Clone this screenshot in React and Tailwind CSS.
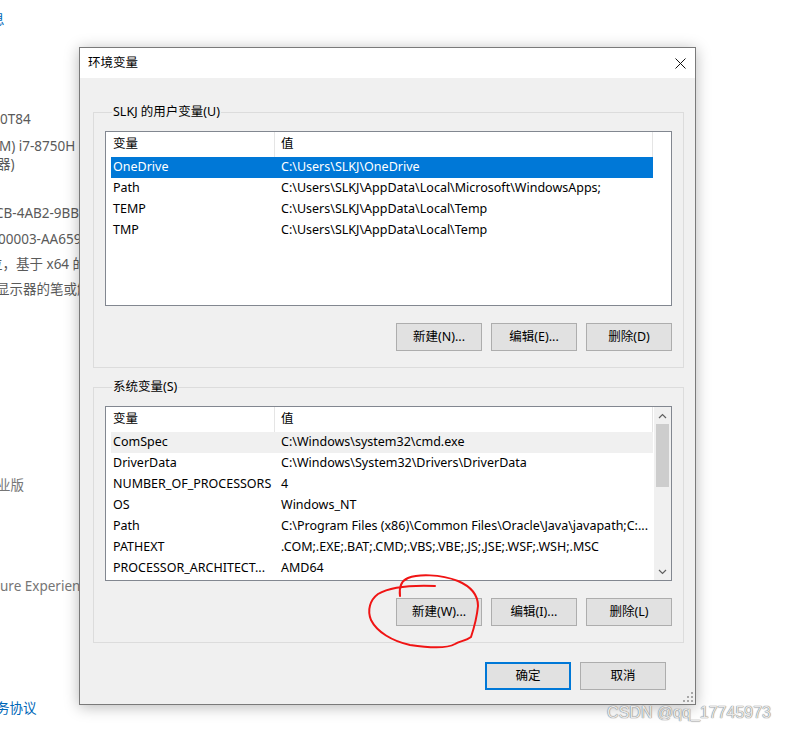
import React from "react"

const userVars = [
  ["OneDrive", "C:\\Users\\SLKJ\\OneDrive"],
  ["Path", "C:\\Users\\SLKJ\\AppData\\Local\\Microsoft\\WindowsApps;"],
  ["TEMP", "C:\\Users\\SLKJ\\AppData\\Local\\Temp"],
  ["TMP", "C:\\Users\\SLKJ\\AppData\\Local\\Temp"],
]

const sysVars = [
  ["ComSpec", "C:\\Windows\\system32\\cmd.exe"],
  ["DriverData", "C:\\Windows\\System32\\Drivers\\DriverData"],
  ["NUMBER_OF_PROCESSORS", "4"],
  ["OS", "Windows_NT"],
  ["Path", "C:\\Program Files (x86)\\Common Files\\Oracle\\Java\\javapath;C:..."],
  ["PATHEXT", ".COM;.EXE;.BAT;.CMD;.VBS;.VBE;.JS;.JSE;.WSF;.WSH;.MSC"],
  ["PROCESSOR_ARCHITECT...", "AMD64"],
]

const Chevron = ({ down }) => (
  <svg width="9" height="6" viewBox="0 0 9 6" fill="none" stroke="#606060" strokeWidth="1.2">
    {down ? <polyline points="1,1 4.5,4.5 8,1" /> : <polyline points="1,5 4.5,1.5 8,5" />}
  </svg>
)

const Header = () => (
  <div className="flex h-[25px] items-center text-black">
    <div className="w-[164px] h-full flex items-center pl-[2px] border-r border-[#e5e5e5]">变量</div>
    <div className="w-[378px] h-full flex items-center pl-[6px] border-r border-[#e5e5e5]">值</div>
  </div>
)

const Row = ({ name, value, mode }) => {
  let cls = "text-black"
  if (mode === "sel") cls = "bg-[#0078d7] text-white"
  if (mode === "hover") cls = "bg-[#f0f0f0] text-black"
  return (
    <div className={`flex h-[21px] items-center w-[542px] whitespace-nowrap ${cls}`}>
      <div className="w-[164px] pl-[2px] overflow-hidden">{name}</div>
      <div className="flex-1 pl-[6px] overflow-hidden">{value}</div>
    </div>
  )
}

const Btn = ({ children, primary }) => (
  <div
    className={`w-[86px] h-[28px] flex items-center justify-center bg-[#e1e1e1] text-black ${
      primary ? "border-2 border-[#0078d7]" : "border border-[#adadad]"
    }`}
  >
    {children}
  </div>
)

const Group = ({ title, children }) => (
  <fieldset className="w-[591px] ml-[13px] border border-[#dcdcdc] pl-[11px] pr-[10px] pb-[16px]">
    <legend className="ml-[7px] px-[1px] h-[16px] leading-[16px] text-black">{title}</legend>
    {children}
  </fieldset>
)

export default function App() {
  return (
    <div className="relative w-[786px] h-[732px] bg-white overflow-hidden font-['Noto_Sans','Noto_Sans_CJK_SC',sans-serif]">
      {/* page behind the dialog */}
      <div className="flex flex-col text-[13.5px] leading-[18px] text-[#5a5a5a] whitespace-nowrap">
        <div className="mt-[10px] -ml-[9px] text-[#0067b8]">息</div>
        <div className="mt-[82px]">0T84</div>
        <div className="mt-[9px] -ml-[1px]">M) i7-8750H CPU</div>
        <div className="mt-0 -ml-[3px]">器)</div>
        <div className="mt-[31px] -ml-[5px]">CB-4AB2-9BB7</div>
        <div className="mt-[8px] -ml-[2px]">00003-AA659</div>
        <div className="mt-[7px] -ml-[11px]">位，基于 x64 的处理器</div>
        <div className="mt-[7px] -ml-[4px]">显示器的笔或触控</div>
        <div className="mt-[178px] -ml-[3px] text-[#767676]">业版</div>
        <div className="mt-[83px] text-[#767676]">ure Experience</div>
        <div className="mt-[104px] -ml-[4px] text-[#0067b8]">务协议</div>
      </div>

      {/* dialog window */}
      <div className="absolute left-[79px] top-[47px] w-[617px] h-[658px] flex flex-col border border-[#7a7a7a] bg-[#f0f0f0] shadow-[0_2px_14px_rgba(0,0,0,0.28)] text-[12.5px]">
        <div className="h-[30px] bg-white flex items-center justify-between pl-[8px] pr-[9px]">
          <span className="text-black">环境变量</span>
          <svg width="11" height="11" viewBox="0 0 11 11" stroke="#111" strokeWidth="1">
            <line x1="0.5" y1="0.5" x2="10.5" y2="10.5" />
            <line x1="10.5" y1="0.5" x2="0.5" y2="10.5" />
          </svg>
        </div>

        <div className="flex flex-col pt-[26px]">
          <Group title="SLKJ 的用户变量(U)">
            <div className="mt-[11px] w-[567px] h-[175px] border border-[#828790] bg-white pl-[5px]">
              <Header />
              {userVars.map((v, i) => (
                <Row key={v[0]} name={v[0]} value={v[1]} mode={i === 0 ? "sel" : ""} />
              ))}
            </div>
            <div className="mt-[17px] w-[567px] flex justify-end gap-[9px]">
              <Btn>新建(N)...</Btn>
              <Btn>编辑(E)...</Btn>
              <Btn>删除(D)</Btn>
            </div>
          </Group>

          <div className="h-[11px]" />

          <Group title="系统变量(S)">
            <div className="mt-[11px] w-[567px] h-[175px] border border-[#828790] bg-white flex">
              <div className="flex-1 pl-[5px] overflow-hidden">
                <Header />
                {sysVars.map((v, i) => (
                  <Row key={v[0]} name={v[0]} value={v[1]} mode={i === 0 ? "hover" : ""} />
                ))}
              </div>
              <div className="w-[17px] bg-[#f0f0f0] flex flex-col">
                <div className="h-[17px] flex items-center justify-center">
                  <Chevron />
                </div>
                <div className="mx-[2px] h-[63px] bg-[#cdcdcd]" />
                <div className="flex-1" />
                <div className="h-[17px] flex items-center justify-center">
                  <Chevron down />
                </div>
              </div>
            </div>
            <div className="mt-[17px] w-[567px] flex justify-end gap-[9px]">
              <Btn>新建(W)...</Btn>
              <Btn>编辑(I)...</Btn>
              <Btn>删除(L)</Btn>
            </div>
          </Group>

          <div className="mt-[19px] flex justify-end gap-[9px] pr-[29px]">
            <Btn primary>确定</Btn>
            <Btn>取消</Btn>
          </div>
        </div>

        {/* resize grip */}
        <svg className="absolute right-[2px] bottom-[2px]" width="10" height="10" viewBox="0 0 10 10" fill="#a8a8a8">
          <rect x="8" y="0" width="2" height="2" />
          <rect x="4" y="4" width="2" height="2" />
          <rect x="8" y="4" width="2" height="2" />
          <rect x="0" y="8" width="2" height="2" />
          <rect x="4" y="8" width="2" height="2" />
          <rect x="8" y="8" width="2" height="2" />
        </svg>
      </div>

      {/* red hand-drawn annotation */}
      <svg className="absolute left-0 top-0 pointer-events-none" width="786" height="732" fill="none">
        <path
          d="M400 596 C399 588 401 581 408 578 C418 574 440 574 458 581 C472 587 478 596 478 606 C477 616 474 628 471 637 C466 641 459 641 455 644 C448 648 430 648 410 645 C392 641 377 632 371 620 C367 610 370 600 378 594 C390 587 410 585 435 586"
          stroke="#f01414"
          strokeWidth="2"
          strokeLinecap="round"
        />
      </svg>

      {/* watermark */}
      <div className="absolute right-[15px] bottom-[7px] text-[16px] text-[#e8e8e8] font-['Liberation_Sans',sans-serif] [text-shadow:0_0_1px_#777,0_0_1px_#777]">
        CSDN @qq_17745973
      </div>
    </div>
  )
}
